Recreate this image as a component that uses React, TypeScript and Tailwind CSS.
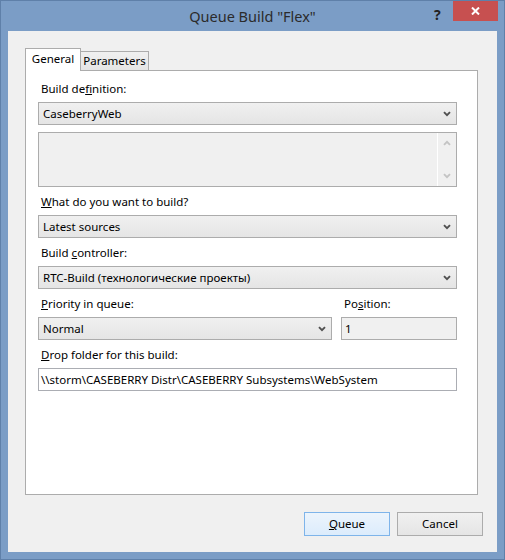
import type { ReactNode } from "react"

const font = { fontFamily: '"Noto Sans", "Open Sans", sans-serif' }

const Chevron = ({ up = false, color = "#505050" }: { up?: boolean; color?: string }) => (
  <svg width="8" height="6" viewBox="0 0 8 6" className={up ? "rotate-180" : ""}>
    <path d="M1 1.2 L4 4.2 L7 1.2" fill="none" stroke={color} strokeWidth="1.9" />
  </svg>
)

const Label = ({ children, className = "" }: { children: ReactNode; className?: string }) => (
  <div className={`h-[16px] leading-[16px] pl-[3px] mb-[5px] text-[11.5px] text-black ${className}`}>{children}</div>
)

const Combo = ({ value, className = "" }: { value: string; className?: string }) => (
  <div
    className={`flex items-center justify-between h-[23px] border border-[#acacac] bg-linear-to-b from-[#f0f0f0] to-[#e5e5e5] pl-[4px] pr-[5px] text-[11.5px] text-black ${className}`}
  >
    <span className="whitespace-nowrap">{value}</span>
    <Chevron />
  </div>
)

export default function App() {
  return (
    <div style={font} className="w-[505px] h-[560px] flex flex-col bg-[#7b9dc6] border border-[#5f80a9]">
      {/* title bar */}
      <div className="relative h-[30px] flex items-center justify-center">
        <span className="text-[14.5px] text-[#2b2b2b] leading-none">Queue Build "Flex"</span>
        <span className="absolute left-[433px] top-[3px] text-[14px] font-bold text-[#222]">?</span>
        <div className="absolute right-[6px] top-0 w-[45px] h-[20px] bg-[#c75050] flex items-center justify-center">
          <svg width="9" height="8" viewBox="0 0 9 8">
            <path d="M1 0.5 L8 7.5 M8 0.5 L1 7.5" stroke="#fff" strokeWidth="2" />
          </svg>
        </div>
      </div>

      {/* client */}
      <div className="mx-[7px] mb-[7px] flex-1 bg-[#f0f0f0] pl-[17px] pt-[17px] pr-[19px] flex flex-col">
        <div className="flex items-end h-[22px] text-[11.5px] text-black">
          <div className="relative z-10 w-[56px] h-[23px] mb-[-1px] bg-white border border-b-0 border-[#acacac] flex items-center justify-center pb-[3px]">
            General
          </div>
          <div className="w-[68px] h-[19px] bg-linear-to-b from-[#f0f0f0] to-[#e5e5e5] border-t border-r border-[#acacac] flex items-center justify-center whitespace-nowrap">
            Parameters
          </div>
        </div>

        <div className="h-[425px] bg-white border border-[#acacac] pl-[12px] pr-[20px] pt-[10px]">
          <Label>
            Build de<u>f</u>inition:
          </Label>
          <Combo value="CaseberryWeb" />
          <div className="mt-[7px] h-[55px] border border-[#acacac] bg-[#f0f0f0] flex justify-end">
            <div className="w-[19px] border-l border-white flex flex-col items-center justify-between py-[7px]">
              <Chevron up color="#c4c4c4" />
              <Chevron color="#c4c4c4" />
            </div>
          </div>

          <Label className="mt-[7px]">
            <u>W</u>hat do you want to build?
          </Label>
          <Combo value="Latest sources" />

          <Label className="mt-[7px]">
            Build <u>c</u>ontroller:
          </Label>
          <Combo value="RTC-Build (технологические проекты)" />

          <div className="mt-[7px] flex gap-[9px]">
            <div className="w-[294px]">
              <Label>
                <u>P</u>riority in queue:
              </Label>
              <Combo value="Normal" />
            </div>
            <div className="flex-1">
              <Label>
                Po<u>s</u>ition:
              </Label>
              <div className="h-[23px] border border-[#acacac] bg-[#f0f0f0] flex items-center pl-[3px] text-[11.5px] text-black">
                1
              </div>
            </div>
          </div>

          <Label className="mt-[7px]">
            <u>D</u>rop folder for this build:
          </Label>
          <div className="h-[23px] border border-[#abadb3] bg-white flex items-center pl-[2px] text-[11.5px] text-black whitespace-nowrap">
            \\storm\CASEBERRY Distr\CASEBERRY Subsystems\WebSystem
          </div>
        </div>

        <div className="mt-[17px] mr-[-5px] flex justify-end gap-[7px] text-[11.5px] text-black">
          <button className="w-[86px] h-[24px] border border-[#7eb4ea] bg-linear-to-b from-[#ecf4fc] to-[#dcecfc]">
            <u>Q</u>ueue
          </button>
          <button className="w-[86px] h-[24px] border border-[#acacac] bg-linear-to-b from-[#f0f0f0] to-[#e5e5e5]">
            Cancel
          </button>
        </div>
      </div>
    </div>
  )
}
